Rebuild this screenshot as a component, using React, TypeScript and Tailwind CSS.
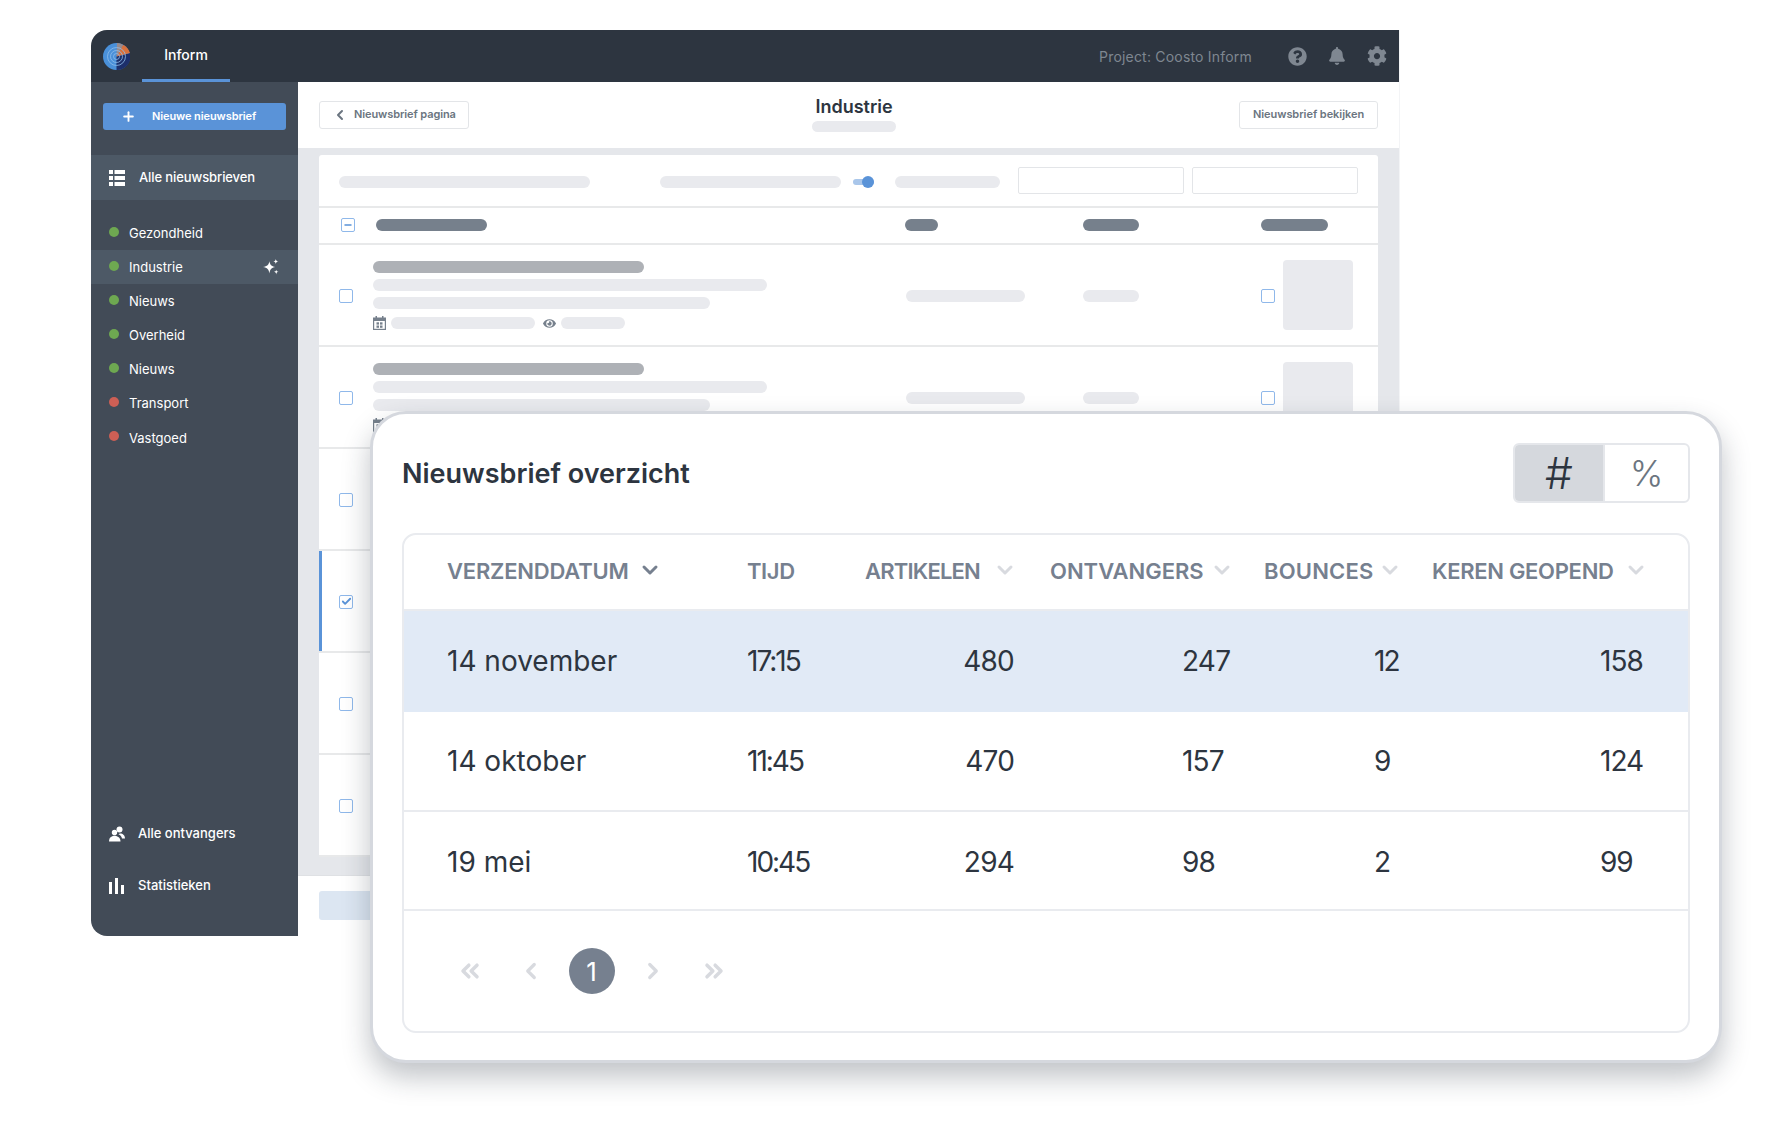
import { FaBell, FaCog, FaEye, FaQuestionCircle } from 'react-icons/fa';
import { Check, ChevronDown, ChevronLeft, ChevronRight, ChevronsLeft, ChevronsRight, Minus, Plus } from 'lucide-react';

const categories = [
  { name: 'Gezondheid', dot: 'bg-[#6ea851]' },
  { name: 'Industrie', dot: 'bg-[#6ea851]', active: true },
  { name: 'Nieuws', dot: 'bg-[#6ea851]' },
  { name: 'Overheid', dot: 'bg-[#6ea851]' },
  { name: 'Nieuws', dot: 'bg-[#6ea851]' },
  { name: 'Transport', dot: 'bg-[#cd5f55]' },
  { name: 'Vastgoed', dot: 'bg-[#cd5f55]', last: true },
];

const columns = [
  { label: 'VERZENDDATUM', dark: true, style: 'gap-[9px] tracking-[-0.2px]' },
  { label: 'TIJD', style: 'tracking-[-0.4px]' },
  { label: 'ARTIKELEN', style: 'gap-[13px] tracking-[-0.8px]' },
  { label: 'ONTVANGERS', style: 'gap-[6px] tracking-[0px]' },
  { label: 'BOUNCES', style: 'gap-[4px] tracking-[0.2px]' },
  { label: 'KEREN GEOPEND', style: 'gap-[10px] tracking-[-0.3px]' },
];

const stats = [
  { date: '14 november', time: '17:15', articles: '480', recipients: '247', bounces: '12', opened: '158', rowClass: 'h-[101px] bg-[#e1eaf6] pb-[2px]' },
  { date: '14 oktober', time: '11:45', articles: '470', recipients: '157', bounces: '9', opened: '124', rowClass: 'h-[100px] border-b-2 border-[#e9ebef]' },
  { date: '19 mei', time: '10:45', articles: '294', recipients: '98', bounces: '2', opened: '99', rowClass: 'h-[99px] border-b-2 border-[#e9ebef] pt-[2px]' },
];

const gridCols = 'grid grid-cols-[300px_118px_185px_214px_168px_1fr] pl-[43px]';

const Logo = () => (
  <svg width="27" height="27" viewBox="0 0 27 27">
    <circle cx="13.5" cy="13.5" r="13.5" fill="#4a90d9" />
    <path d="M13.5 13.5 L27 10 A13.5 13.5 0 0 1 13.5 27 Z" fill="#1d2f6b" />
    <path d="M13.5 13.5 L20 1.7 A13.5 13.5 0 0 1 27 10 Z" fill="#d9703c" />
    <path d="M13.5 13.5 L14 0 A13.5 13.5 0 0 1 20 1.7 Z" fill="#9a8a8a" />
    <circle cx="13.5" cy="13.5" r="3" fill="none" stroke="#8fbdea" strokeWidth="0.8" />
    <circle cx="13.5" cy="13.5" r="6" fill="none" stroke="#8fbdea" strokeWidth="0.8" />
    <circle cx="13.5" cy="13.5" r="9" fill="none" stroke="#8fbdea" strokeWidth="0.8" />
  </svg>
);

const ListIcon = () => (
  <svg width="16" height="16" viewBox="0 0 16 16" fill="currentColor">
    <rect x="0" y="0" width="4" height="4" />
    <rect x="5.5" y="0" width="10.5" height="4" />
    <rect x="0" y="6" width="4" height="4" />
    <rect x="5.5" y="6" width="10.5" height="4" />
    <rect x="0" y="12" width="4" height="4" />
    <rect x="5.5" y="12" width="10.5" height="4" />
  </svg>
);

const SparkleIcon = () => (
  <svg width="16" height="16" viewBox="0 0 15 15" fill="currentColor">
    <path d="M6 2 C6.6 5.4 7.9 6.7 11.5 7.5 C7.9 8.3 6.6 9.6 6 13.5 C5.4 9.6 4.1 8.3 0 7.5 C4.1 6.7 5.4 5.4 6 2 Z" />
    <path d="M12 0 C12.2 1.4 12.8 2 14.4 2.3 C12.8 2.6 12.2 3.2 12 4.8 C11.8 3.2 11.2 2.6 9.6 2.3 C11.2 2 11.8 1.4 12 0 Z" />
    <path d="M12.4 10 C12.6 11.2 13.1 11.7 14.6 12 C13.1 12.3 12.6 12.8 12.4 14.6 C12.2 12.8 11.7 12.3 10.2 12 C11.7 11.7 12.2 11.2 12.4 10 Z" />
  </svg>
);

const UsersIcon = () => (
  <svg width="16" height="16" viewBox="0 0 16 16" fill="currentColor">
    <circle cx="10.5" cy="3.5" r="3" />
    <path d="M11 7.5 C14 7.5 16 9.5 16 12.5 L13 12.5 C12.7 10.5 11.5 9 9.5 8.2 C10 7.8 10.5 7.5 11 7.5 Z" />
    <circle cx="5.5" cy="6.5" r="2.7" />
    <path d="M0 15.5 C0 12 2.3 9.8 5.5 9.8 C8.7 9.8 11.5 12 11.5 15.5 Z" />
  </svg>
);

const BarsIcon = () => (
  <svg width="16" height="16" viewBox="0 0 16 16" fill="currentColor">
    <rect x="0" y="4" width="3" height="12" />
    <rect x="6" y="0" width="3" height="16" />
    <rect x="12" y="7" width="3" height="9" />
  </svg>
);

const CalendarIcon = () => (
  <svg width="13" height="14" viewBox="0 0 13 14" className="shrink-0">
    <rect x="0" y="1.5" width="13" height="12.5" fill="#76808c" />
    <rect x="2.5" y="0" width="1.5" height="3" fill="#76808c" />
    <rect x="9" y="0" width="1.5" height="3" fill="#76808c" />
    <rect x="1.2" y="5" width="10.6" height="7.8" fill="#ffffff" />
    <rect x="3.5" y="6.3" width="2.5" height="2.3" fill="#76808c" />
    <rect x="7" y="6.3" width="2.5" height="2.3" fill="#76808c" />
    <rect x="3.5" y="9.5" width="2.5" height="2.3" fill="#76808c" />
    <rect x="7" y="9.5" width="2.5" height="2.3" fill="#76808c" />
  </svg>
);

const Pill = ({ className }: { className: string }) => <div className={`rounded-full ${className}`} />;

const Checkbox = ({ state }: { state?: 'checked' | 'minus' }) => (
  <div className="flex h-[14px] w-[14px] shrink-0 items-center justify-center rounded-[2px] border-[1.5px] border-[#8fb8ea] bg-white">
    {state === 'checked' && <Check size={11} strokeWidth={4} className="text-[#5a93d8]" />}
    {state === 'minus' && <Minus size={10} strokeWidth={4} className="text-[#5a93d8]" />}
  </div>
);

const ListRow = ({ checked }: { checked?: boolean }) => (
  <div className="relative flex h-[102px] shrink-0 items-center border-b-2 border-[#e8e9ea] pl-[20px] pt-[1px]">
    {checked && <div className="absolute bottom-0 left-0 top-0 w-[3px] bg-[#5a93d8]" />}
    <Checkbox state={checked ? 'checked' : undefined} />
    <div className="ml-[20px] flex w-[533px] shrink-0 flex-col gap-[6px]">
      <Pill className="h-[12px] w-[271px] bg-[#aeb1b6]" />
      <Pill className="h-[12px] w-[394px] bg-[#e9eaee]" />
      <Pill className="h-[12px] w-[337px] bg-[#e9eaee]" />
      <div className="mt-[1px] flex h-[14px] items-center">
        <CalendarIcon />
        <Pill className="ml-[5px] h-[12px] w-[144px] bg-[#e9eaee]" />
        <FaEye className="ml-[8px] h-[13px] w-[13px] text-[#76808c]" />
        <Pill className="ml-[5px] h-[12px] w-[64px] bg-[#e9eaee]" />
      </div>
    </div>
    <Pill className="h-[12px] w-[119px] bg-[#e9eaee]" />
    <Pill className="ml-[58px] h-[12px] w-[56px] bg-[#e9eaee]" />
    <div className="ml-[122px]">
      <Checkbox />
    </div>
    <div className="mb-[2px] ml-[8px] h-[70px] w-[70px] rounded-[4px] bg-[#e9eaee]" />
  </div>
);

export default function App() {
  return (
    <div className="relative h-[1123px] w-[1792px] overflow-hidden bg-white pl-[91px] pt-[30px] font-['Inter',sans-serif]">
      {/* app window */}
      <div className="flex h-[906px] w-[1309px] flex-col overflow-hidden rounded-l-[16px] border-r border-[#f3f4f6]">
        <header className="flex h-[52px] shrink-0 items-stretch bg-[#2d3540] pl-[12px]">
          <div className="flex items-center">
            <Logo />
          </div>
          <div className="ml-[12px] flex w-[88px] items-center justify-center border-b-[3px] border-[#5a93d8] text-[14px] font-medium text-white">
            Inform
          </div>
          <div className="ml-auto flex items-center pr-[12px] text-[#7f8791]">
            <span className="w-[153px] whitespace-nowrap text-[14px] tracking-[0.2px]">Project: Coosto Inform</span>
            <FaQuestionCircle className="ml-[36px] h-[19px] w-[19px]" />
            <FaBell className="ml-[21px] h-[18px] w-[18px]" />
            <FaCog className="ml-[21px] h-[20px] w-[20px]" />
          </div>
        </header>

        <div className="flex min-h-0 flex-1">
          {/* sidebar */}
          <aside className="flex w-[207px] shrink-0 flex-col bg-[#424b57] text-white">
            <div className="mx-[12px] mt-[21px] flex h-[27px] items-center rounded-[3px] bg-[#5a93d8] pl-[18px]">
              <Plus size={15} strokeWidth={3} />
              <span className="ml-[16px] text-[11px] font-semibold tracking-[-0.1px]">Nieuwe nieuwsbrief</span>
            </div>
            <div className="mt-[25px] flex h-[45px] items-center bg-[#4d5966] pl-[18px]">
              <ListIcon />
              <span className="ml-[14px] text-[13px] font-medium tracking-[-0.1px]">Alle nieuwsbrieven</span>
            </div>
            <nav className="mt-[16px] flex flex-col">
              {categories.map((item, i) => (
                <div key={i} className={`flex h-[34px] items-center pl-[18px] pr-[19px] ${item.active ? 'bg-[#4d5966]' : ''}`}>
                  <div className={`h-[10px] w-[10px] -translate-y-[1px] rounded-full ${item.dot}`} />
                  <span className={`ml-[10px] text-[13px] ${item.last ? 'pt-[4px]' : 'pt-[2px]'}`}>{item.name}</span>
                  {item.active && (
                    <span className="ml-auto">
                      <SparkleIcon />
                    </span>
                  )}
                </div>
              ))}
            </nav>
            <div className="mt-auto flex h-[52px] items-center pl-[18px]">
              <UsersIcon />
              <span className="ml-[13px] text-[13px] font-medium">Alle ontvangers</span>
            </div>
            <div className="mb-[24px] flex h-[52px] items-center pl-[18px]">
              <BarsIcon />
              <span className="ml-[13px] text-[13px] font-medium">Statistieken</span>
            </div>
          </aside>

          {/* main */}
          <main className="flex min-w-0 flex-1 flex-col bg-white">
            <div className="flex h-[66px] shrink-0 items-center justify-between px-[21px]">
              <div className="flex h-[28px] w-[150px] items-center rounded-[3px] border border-[#e3e5e8] pb-[1px] pl-[12px] text-[11px] font-semibold tracking-[-0.1px] text-[#6b7580]">
                <ChevronLeft size={16} strokeWidth={3} />
                <span className="ml-[6px] whitespace-nowrap">Nieuwsbrief pagina</span>
              </div>
              <div className="flex flex-col items-center pb-[3px]">
                <span className="text-[18px] font-semibold leading-[24px] text-[#2d3540]">Industrie</span>
                <Pill className="mt-[2px] h-[11px] w-[84px] bg-[#e9eaee]" />
              </div>
              <div className="flex h-[28px] w-[139px] items-center justify-center whitespace-nowrap rounded-[3px] border border-[#e3e5e8] pb-[1px] text-[11px] font-semibold tracking-[-0.05px] text-[#6b7580]">
                Nieuwsbrief bekijken
              </div>
            </div>

            <div className="min-h-0 flex-1 overflow-hidden bg-[#e5e7eb] px-[21px] pt-[7px]">
              <div className="flex flex-col rounded-t-[3px] bg-white">
                <div className="flex h-[53px] shrink-0 items-center border-b-2 border-[#e8e9ea] pl-[20px]">
                  <Pill className="mt-[2px] h-[12px] w-[251px] bg-[#e9eaee]" />
                  <Pill className="ml-[70px] mt-[2px] h-[12px] w-[181px] bg-[#e9eaee]" />
                  <div className="relative ml-[12px] mt-[2px] h-[6px] w-[21px] rounded-full bg-[#a9c6ea]">
                    <div className="absolute -top-[3px] right-0 h-[12px] w-[12px] rounded-full bg-[#5a93d8]" />
                  </div>
                  <Pill className="ml-[21px] mt-[2px] h-[12px] w-[105px] bg-[#e9eaee]" />
                  <div className="ml-[18px] h-[27px] w-[166px] rounded-[2px] border border-[#e3e5e8]" />
                  <div className="ml-[8px] h-[27px] w-[166px] rounded-[2px] border border-[#e3e5e8]" />
                </div>
                <div className="flex h-[37px] shrink-0 items-center border-b-2 border-[#e8e9ea] pb-[1px] pl-[22px]">
                  <Checkbox state="minus" />
                  <Pill className="ml-[21px] h-[12px] w-[111px] bg-[#76808c]" />
                  <Pill className="ml-[418px] h-[12px] w-[33px] bg-[#76808c]" />
                  <Pill className="ml-[145px] h-[12px] w-[56px] bg-[#76808c]" />
                  <Pill className="ml-[122px] h-[12px] w-[67px] bg-[#76808c]" />
                </div>
                <ListRow />
                <ListRow />
                <ListRow />
                <ListRow checked />
                <ListRow />
                <ListRow />
              </div>
            </div>

            <div className="flex h-[61px] shrink-0 items-start border-t border-[#dfe1e4] pl-[21px] pt-[15px]">
              <div className="h-[29px] w-[200px] rounded-[3px] bg-[#dce6f2]" />
            </div>
          </main>
        </div>
      </div>

      {/* overview card floating over the window */}
      <div className="absolute left-[370px] top-[411px] flex h-[652px] w-[1352px] flex-col rounded-[36px] border-[3px] border-[#d5d8de] bg-white px-[29px] shadow-[0_14px_28px_rgba(30,40,55,0.28)]">
        <div className="flex h-[119px] shrink-0 items-center justify-between pt-[1px]">
          <h2 className="text-[27px] font-semibold text-[#2d3540]">Nieuwsbrief overzicht</h2>
          <div className="mb-[2px] flex h-[60px] w-[177px] overflow-hidden rounded-[6px] border-2 border-[#e5e7eb] font-light">
            <div className="flex w-[88px] items-center justify-center bg-[#d5d8dd] text-[44px] text-[#2d3540]">#</div>
            <div className="flex flex-1 items-center justify-center border-l-2 border-[#e5e7eb] text-[36px] text-[#6b7580]">%</div>
          </div>
        </div>

        <div className="flex h-[500px] flex-col overflow-hidden rounded-[14px] border-2 border-[#e9ebef]">
          <div className={`${gridCols} h-[76px] shrink-0 items-center border-b-2 border-[#e9ebef] pb-[1px]`}>
            {columns.map((col) => (
              <div key={col.label} className={`flex items-center whitespace-nowrap text-[22px] font-semibold text-[#76808f] ${col.style}`}>
                {col.label}
                {col.label !== 'TIJD' && (
                  <ChevronDown size={24} strokeWidth={3} className={`mb-[3px] ${col.dark ? 'text-[#76808f]' : 'text-[#d8dadf]'}`} />
                )}
              </div>
            ))}
          </div>
          {stats.map((row) => (
            <div key={row.date} className={`${gridCols} shrink-0 items-center text-[28px] text-[#2d3540] ${row.rowClass}`}>
              <div>{row.date}</div>
              <div className="tracking-[-2px]">{row.time}</div>
              <div className="pr-[36px] text-right tracking-[-0.8px]">{row.articles}</div>
              <div className="pl-[132px] tracking-[-0.8px]">{row.recipients}</div>
              <div className="pl-[110px] tracking-[-2px]">{row.bounces}</div>
              <div className="pl-[168px] tracking-[-1px]">{row.opened}</div>
            </div>
          ))}
          <div className="flex flex-1 items-center pl-[35px] text-[#d8dadf]">
            <div className="flex w-[61px] justify-center">
              <ChevronsLeft size={28} strokeWidth={3} />
            </div>
            <div className="flex w-[61px] justify-center">
              <ChevronLeft size={26} strokeWidth={3} />
            </div>
            <div className="flex w-[61px] justify-center">
              <div className="flex h-[46px] w-[46px] items-center justify-center rounded-full bg-[#76808f] text-[26px] text-white">1</div>
            </div>
            <div className="flex w-[61px] justify-center">
              <ChevronRight size={26} strokeWidth={3} />
            </div>
            <div className="flex w-[61px] justify-center">
              <ChevronsRight size={28} strokeWidth={3} />
            </div>
          </div>
        </div>
      </div>
    </div>
  );
}
